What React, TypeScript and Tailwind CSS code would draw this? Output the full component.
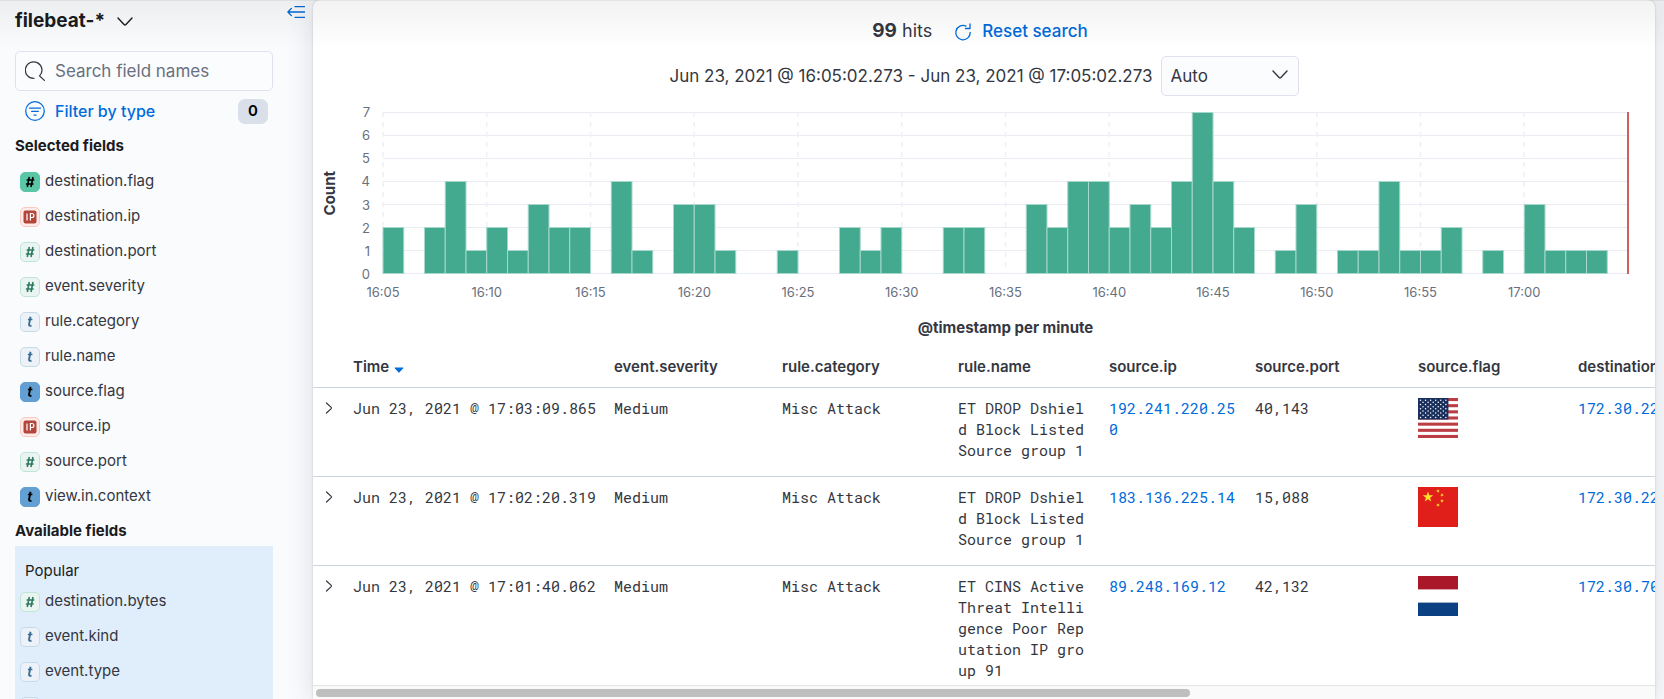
import { useState } from "react";

type Kind = "number" | "string" | "ip";
type Field = { name: string; kind: Kind; solid?: boolean };

const selectedFields: Field[] = [
  { name: "destination.flag", kind: "number", solid: true },
  { name: "destination.ip", kind: "ip" },
  { name: "destination.port", kind: "number" },
  { name: "event.severity", kind: "number" },
  { name: "rule.category", kind: "string" },
  { name: "rule.name", kind: "string" },
  { name: "source.flag", kind: "string", solid: true },
  { name: "source.ip", kind: "ip" },
  { name: "source.port", kind: "number" },
  { name: "view.in.context", kind: "string", solid: true },
];

const popularFields: Field[] = [
  { name: "destination.bytes", kind: "number" },
  { name: "event.kind", kind: "string" },
  { name: "event.type", kind: "string" },
  { name: "host.name", kind: "string" },
];

// Hits per minute, starting at 16:05.
const counts = [
  2, 0, 2, 4, 1, 2, 1, 3, 2, 2, 0, 4, 1, 0, 3, 3, 1, 0, 0, 1, 0, 0, 2, 1, 2, 0, 0, 2, 2, 0,
  0, 3, 2, 4, 4, 2, 3, 2, 4, 7, 4, 2, 0, 1, 3, 0, 1, 1, 4, 1, 1, 2, 0, 1, 0, 3, 1, 1, 1, 0,
];
const ticks = ["16:05", "16:10", "16:15", "16:20", "16:25", "16:30", "16:35", "16:40", "16:45", "16:50", "16:55", "17:00"];
const MAX = 7;

const rows = [
  { time: "Jun 23, 2021 @ 17:03:09.865", rule: "ET DROP Dshield Block Listed Source group 1", ip: "192.241.220.250", port: "40,143", flag: "us", dest: "172.30.22" },
  { time: "Jun 23, 2021 @ 17:02:20.319", rule: "ET DROP Dshield Block Listed Source group 1", ip: "183.136.225.14", port: "15,088", flag: "cn", dest: "172.30.22" },
  { time: "Jun 23, 2021 @ 17:01:40.062", rule: "ET CINS Active Threat Intelligence Poor Reputation IP group 91", ip: "89.248.169.12", port: "42,132", flag: "nl", dest: "172.30.70" },
];

const tokenStyle = {
  number: "border-[#bfe5d7] bg-[#eaf5f1] text-[#2f7a63]",
  string: "border-[#c6dbe9] bg-[#edf2f8] text-[#3b6e95]",
  ip: "border-[#fac9c2] bg-[#fdebe9] text-[#b4453a]",
};
const solidStyle = {
  number: "border-[#5ac6a6] bg-[#5ac6a6] text-black",
  string: "border-[#629fd2] bg-[#629fd2] text-black",
  ip: "border-[#e7664c] bg-[#e7664c] text-black",
};

function Token({ kind, solid }: { kind: Kind; solid?: boolean }) {
  return (
    <span className={`flex size-5 shrink-0 items-center justify-center rounded-[5px] border ${solid ? solidStyle[kind] : tokenStyle[kind]}`}>
      {kind === "number" && (
        <svg viewBox="0 0 10 12" className="h-3 w-[10px]" fill="none" stroke="currentColor" strokeWidth="1.6">
          <path d="M4.3 1 2.3 11M8 1 6 11M1.6 4H9.3M.9 8H8.6" />
        </svg>
      )}
      {kind === "string" && (
        <svg viewBox="0 0 10 12" className="h-3 w-[10px]" fill="none" stroke="currentColor" strokeWidth="1.9">
          <path d="M5.5 .8 4.100 8.2Q3.8 10 5.300 9.900L6.500 9.700" />
          <path d="M2.900 3.500H7.400" strokeWidth="1.5" />
        </svg>
      )}
      {kind === "ip" && (
        <svg viewBox="0 0 14 14" className="size-[14px]" fill="none">
          <rect x=".5" y=".5" width="13" height="13" rx="2" fill="currentColor" />
          <path d="M4 3.5v7M7.4 10.5v-7h1.5a2 2 0 0 1 0 4H7.4" stroke="#fff" strokeWidth="1.2" />
        </svg>
      )}
    </span>
  );
}

function FieldList({ fields }: { fields: Field[] }) {
  return (
    <ul>
      {fields.map((f) => (
        <li key={f.name}>
          <button type="button" className="flex h-[35px] w-full items-center gap-[5px] pl-[5px] text-left text-[15px] text-[#343741]">
            <Token kind={f.kind} solid={f.solid} />
            {f.name}
          </button>
        </li>
      ))}
    </ul>
  );
}

function Chevron({ className }: { className: string }) {
  return (
    <svg viewBox="0 0 16 9" className={className} fill="none" stroke="currentColor" strokeWidth="1.4" strokeLinecap="round" strokeLinejoin="round">
      <path d="m1 1 6.3 6.7q.7.6 1.4 0L15 1" />
    </svg>
  );
}

function Sidebar() {
  const [query, setQuery] = useState("");
  return (
    <aside className="flex w-[313px] shrink-0 overflow-hidden pl-[15px]">
      <div className="w-[258px] shrink-0">
        <button type="button" className="flex h-[43px] items-center gap-3 text-[19px] font-bold text-[#1a1c21]">
          filebeat-*
          <Chevron className="h-[9px] w-4" />
        </button>
        <label className="mt-2 flex h-10 items-center gap-[10px] rounded-[5px] border border-[#dfe1f0] bg-[#fbfcfd] pl-[9px]">
          <svg viewBox="0 0 20 20" className="size-5 shrink-0 text-[#343741]" fill="none" stroke="currentColor" strokeWidth="1.25" strokeLinecap="round">
            <path d="M8.9 17.4A8.3 8.3 0 1 1 14.600 14.900L19.400 19.400" />
          </svg>
          <input
            type="search"
            aria-label="Search field names"
            placeholder="Search field names"
            value={query}
            onChange={(e) => setQuery(e.target.value)}
            className="w-full min-w-0 bg-transparent pt-px text-[17px] text-[#343741] outline-none placeholder:text-[#69707d]"
          />
        </label>
        <button type="button" className="flex h-10 w-full items-center gap-[10px] pr-[5px] pl-[10px] text-[16px] font-medium text-[#006bdb]">
          <svg viewBox="0 0 20 20" className="size-5" fill="none" stroke="currentColor" strokeWidth="1.25" strokeLinecap="round">
            <circle cx="10" cy="10" r="9.3" />
            <path d="M4.400 7h11.200M6.600 10.300h6.800M9 14h2" />
          </svg>
          Filter by type
          <span className="ml-auto flex h-[25px] w-[30px] items-center justify-center rounded-[7px] bg-[#d9e0e9] text-[15px] font-semibold text-black">0</span>
        </button>
        <h2 className="flex h-[33px] items-center pb-[3px] text-[15px] font-bold text-[#1a1c21]">Selected fields</h2>
        <FieldList fields={selectedFields} />
        <h2 className="flex h-8 items-center pt-[3px] text-[15px] font-bold text-[#1a1c21]">Available fields</h2>
        <div className="bg-[#e0eefc] pt-3">
          <h3 className="flex h-[26px] items-center pl-[10px] text-[15px] font-normal text-[#1a1c21]">Popular</h3>
          <FieldList fields={popularFields} />
        </div>
      </div>
      <button type="button" aria-label="Collapse sidebar" className="mt-[5px] ml-[14px] h-[14px] w-[18px] text-[#006bdb]">
        <svg viewBox="0 0 18 14" className="h-[14px] w-[18px]" fill="none" stroke="currentColor" strokeWidth="1.3" strokeLinecap="round" strokeLinejoin="round">
          <path d="M8 1.700h9.500M1 7h16.500M8 12.300h9.500M4.400 3.400.900 7l3.500 3.600" />
        </svg>
      </button>
    </aside>
  );
}

function Histogram() {
  return (
    <section aria-label="Hits over time" className="flex pt-3 pr-[27px] pl-[9px]">
      <div className="flex h-[162px] w-4 items-center justify-center">
        <span className="rotate-180 text-[15px] leading-4 font-bold text-[#343741] [writing-mode:vertical-rl]">Count</span>
      </div>
      <div className="-mt-[9px] flex h-[180px] w-[32px] flex-col justify-between text-right text-[13px] leading-[18px] text-[#69707d]">
        {[7, 6, 5, 4, 3, 2, 1, 0].map((n) => (
          <span key={n}>{n}</span>
        ))}
      </div>
      <div className="ml-[13px] min-w-0 flex-1">
        <svg className="block h-[162px] w-full overflow-visible">
          {Array.from({ length: MAX + 1 }, (_, n) => (
            <line key={n} x1="0" x2="100%" y1={0.5 + n * 23} y2={0.5 + n * 23} stroke="#e9edf3" />
          ))}
          {ticks.map((t, i) => (
            <line key={t} x1={`${(i * 500) / 60}%`} x2={`${(i * 500) / 60}%`} y1="0" y2="162" stroke="#edf0f5" strokeWidth="1.5" strokeDasharray="5 5" />
          ))}
          {counts.map((c, i) =>
            c > 0 ? (
              <rect key={i} x={`${(i * 100) / 60}%`} y={161.5 - c * 23} width={`${100 / 60}%`} height={c * 23} fill="#44aa8f" stroke="#a5d8ca" strokeWidth="1" />
            ) : null,
          )}
          <line x1="100%" x2="100%" y1="0" y2="162" stroke="#d36060" strokeWidth="2" />
        </svg>
        <svg className="block h-[38px] w-full overflow-visible" fill="#69707d" fontSize="13" textAnchor="middle">
          {ticks.map((t, i) => (
            <text key={t} x={`${(i * 500) / 60}%`} y="23">{t}</text>
          ))}
        </svg>
        <p className="text-center text-[15px] leading-8 font-bold text-[#343741]">@timestamp per minute</p>
      </div>
    </section>
  );
}

const starPoints = "0,-5.5 1.3,-1.75 5.2,-1.7 2.1,.7 3.2,4.4 0,2.2 -3.2,4.4 -2.1,.7 -5.2,-1.7 -1.3,-1.75";

function Flag({ code }: { code: string }) {
  if (code === "us") {
    return (
      <svg viewBox="0 0 40 40" className="size-10" role="img" aria-label="United States">
        <rect width="40" height="40" fill="#fff" />
        {[0, 1, 2, 3, 4, 5, 6].map((n) => (
          <rect key={n} y={(n * 80) / 13} width="40" height={40 / 13} fill="#bd3d44" />
        ))}
        <rect width="30.4" height="21.5" fill="#192f5d" />
        {Array.from({ length: 9 }, (_, r) =>
          Array.from({ length: r % 2 ? 5 : 6 }, (_, c) => (
            <circle key={`${r}-${c}`} cx={2.5 + c * 5.07 + (r % 2 ? 2.53 : 0)} cy={2.2 + r * 2.15} r=".75" fill="#fff" />
          )),
        )}
      </svg>
    );
  }
  if (code === "cn") {
    return (
      <svg viewBox="0 0 40 40" className="size-10" role="img" aria-label="China">
        <rect width="40" height="40" fill="#e01f1b" />
        <g fill="#ffde2a">
          <polygon points={starPoints} transform="translate(10 10)" />
          <polygon points={starPoints} transform="translate(20 4) rotate(20) scale(.36)" />
          <polygon points={starPoints} transform="translate(24 8) rotate(45) scale(.36)" />
          <polygon points={starPoints} transform="translate(24 14) scale(.36)" />
          <polygon points={starPoints} transform="translate(20 18) rotate(20) scale(.36)" />
        </g>
      </svg>
    );
  }
  return (
    <svg viewBox="0 0 40 40" className="size-10" role="img" aria-label="Netherlands">
      <rect width="40" height="40" fill="#fff" />
      <rect width="40" height="13.4" fill="#a91728" />
      <rect y="26.6" width="40" height="13.4" fill="#0b4182" />
    </svg>
  );
}

function Documents() {
  const cell = "pt-[10px] pb-3 pr-[10px] pl-2";
  return (
    <table className="w-[2040px] table-fixed border-collapse text-left align-top">
      <colgroup>
        <col className="w-[32px]" />
        <col className="w-[261px]" />
        <col className="w-[168px]" />
        <col className="w-[176px]" />
        <col className="w-[151px]" />
        <col className="w-[146px]" />
        <col className="w-[163px]" />
        <col className="w-[160px]" />
        <col />
      </colgroup>
      <thead>
        <tr className="h-[43px] text-[15px] text-[#343741]">
          <th aria-label="Expand" />
          <th className="pt-1 pl-2 font-semibold">
            <button type="button" className="flex items-center gap-[5px]">
              Time
              <svg viewBox="0 0 10 6" className="mt-[6px] h-[6px] w-[10px]" fill="#006bdb">
                <path d="M1 .5h8q.8.1.2.8L5.6 5.2q-.6.5-1.2 0L.8 1.300Q.2.600 1 .5Z" />
              </svg>
            </button>
          </th>
          {["event.severity", "rule.category", "rule.name", "source.ip", "source.port", "source.flag", "destination.ip"].map((h) => (
            <th key={h} className="pt-1 pl-2 font-semibold">{h}</th>
          ))}
        </tr>
      </thead>
      <tbody className="font-['Roboto_Mono','Liberation_Mono',monospace] text-[15px] leading-[21px] text-[#343741]">
        {rows.map((r) => (
          <tr key={r.time} className="h-[89px] border-t border-[#cbd5df] align-top">
            <td className="py-[12px] pl-3">
              <button type="button" aria-label="Toggle row details" className="flex h-4 items-center">
                <svg viewBox="0 0 8 12" className="h-3 w-2" fill="none" stroke="currentColor" strokeWidth="1.2" strokeLinecap="round" strokeLinejoin="round">
                  <path d="m1.500 1 4.700 4.400q.6.6 0 1.200L1.500 11" />
                </svg>
              </button>
            </td>
            <td className={`${cell} whitespace-nowrap`}>{r.time}</td>
            <td className={cell}>Medium</td>
            <td className={cell}>Misc Attack</td>
            <td className={`${cell} break-all`}>{r.rule}</td>
            <td className={`${cell} break-all`}>
              <a href="#source" className="text-[#006bdb]">{r.ip}</a>
            </td>
            <td className={cell}>{r.port}</td>
            <td className="py-[10px] pl-2">
              <Flag code={r.flag} />
            </td>
            <td className={cell}>
              <a href="#destination" className="text-[#006bdb]">{r.dest}</a>
            </td>
          </tr>
        ))}
      </tbody>
    </table>
  );
}

export default function App() {
  return (
    <div className="relative flex h-screen overflow-hidden bg-[#fafbfd] font-['Inter',sans-serif] text-[#343741]">
      <Sidebar />
      <main className="mr-[9px] flex min-w-0 flex-1 flex-col overflow-hidden rounded-t-[7px] bg-white shadow-[0_0_2px_rgba(60,65,85,0.25),0_4px_28px_rgba(60,65,85,0.16)]">
        <div className="flex min-h-0 flex-1 flex-col overflow-hidden">
          <div className="flex h-[52px] shrink-0 items-center justify-center pt-[11px] pr-2 text-[17px]">
            <p className="text-[18px]">
              <strong className="text-[19px] font-bold">99</strong> hits
            </p>
            <button type="button" className="ml-[22px] flex items-center gap-[10px] font-medium text-[#006bdb]">
              <svg viewBox="0 0 18 18" className="size-[18px]" fill="none" stroke="currentColor" strokeWidth="1.3" strokeLinecap="round" strokeLinejoin="round">
                <path d="M12 3.100A7.200 7.200 0 1 0 16.200 9.300M16 1v4.500H11.500" />
              </svg>
              Reset search
            </button>
          </div>
          <div className="mt-1 flex h-10 shrink-0 items-center justify-center gap-2 text-[17px]">
            <span className="pt-[2px]">Jun 23, 2021 @ 16:05:02.273 - Jun 23, 2021 @ 17:05:02.273</span>
            <span className="relative flex h-10">
              <select aria-label="Time interval" defaultValue="Auto" className="h-10 w-[138px] appearance-none rounded-[5px] border border-[#dfe1f0] bg-[#fbfcfd] pt-[2px] pl-[9px] text-[17px]">
                <option>Auto</option>
                <option>Minute</option>
                <option>Hour</option>
              </select>
              <Chevron className="pointer-events-none absolute top-[14px] right-[11px] h-[9px] w-4" />
            </span>
          </div>
          <div className="mt-1">
            <Histogram />
          </div>
          <Documents />
        </div>
        <div className="h-[14px] shrink-0 border-t border-[#e4e4e4] bg-[#fafafa] px-[3px] pt-[3px]">
          <div className="h-2 w-[65.4%] rounded-full bg-[#bfbfbf]" />
        </div>
      </main>
      <div className="pointer-events-none absolute inset-x-0 top-0 h-12 border-t border-black/10 bg-linear-to-b from-black/5 to-transparent" />
    </div>
  );
}
